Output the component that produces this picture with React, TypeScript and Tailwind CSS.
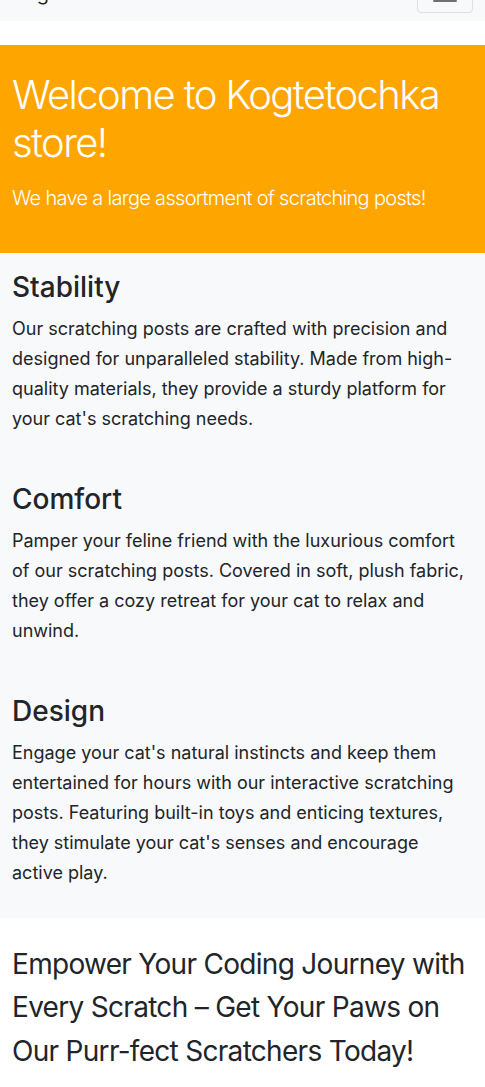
import React from 'react';

const features = [
  {
    title: 'Stability',
    text: "Our scratching posts are crafted with precision and designed for unparalleled stability. Made from high-quality materials, they provide a sturdy platform for your cat's scratching needs.",
  },
  {
    title: 'Comfort',
    text: 'Pamper your feline friend with the luxurious comfort of our scratching posts. Covered in soft, plush fabric, they offer a cozy retreat for your cat to relax and unwind.',
  },
  {
    title: 'Design',
    text: "Engage your cat's natural instincts and keep them entertained for hours with our interactive scratching posts. Featuring built-in toys and enticing textures, they stimulate your cat's senses and encourage active play.",
  },
];

function Navbar() {
  return (
    <nav className="-mt-[35px] flex h-14 items-center justify-between bg-[#f8f9fa] px-3">
      <a className="text-xl leading-[30px] text-black/90">Kogtetochka store</a>
      <button className="flex h-10 w-14 items-center justify-center rounded border border-black/10">
        <svg width="30" height="30" viewBox="0 0 30 30">
          <path
            d="M4 7h22M4 15h22M4 23h22"
            stroke="rgba(0,0,0,0.55)"
            strokeWidth="2"
            strokeLinecap="round"
          />
        </svg>
      </button>
    </nav>
  );
}

export default function App() {
  return (
    <div className="min-h-[1087px] overflow-hidden bg-white font-['Inter',sans-serif] text-[#212529]">
      <Navbar />
      <header className="mt-6 bg-[#ffa500] px-3 pt-[26px] pb-[40px] text-white">
        <h1 className="mb-4 text-[40px] font-light leading-[48px] tracking-[-0.04em]">
          Welcome to Kogtetochka store!
        </h1>
        <p className="text-xl font-light leading-[30px] tracking-[-0.035em]">
          We have a large assortment of scratching posts!
        </p>
      </header>
      <section className="flex flex-col gap-[48px] bg-[#f8f9fa] px-3 pt-[17px] pb-[30px]">
        {features.map((f) => (
          <div key={f.title}>
            <h3 className="mb-[10px] text-[28px] font-medium leading-[34px]">{f.title}</h3>
            <p className="text-lg leading-[30px]">{f.text}</p>
          </div>
        ))}
      </section>
      <section className="px-3 pt-[25px]">
        <p className="text-[28px] leading-[43.3px] tracking-[-0.025em]">
          Empower Your Coding Journey with Every Scratch – Get Your Paws on Our Purr-fect Scratchers Today!
        </p>
      </section>
    </div>
  );
}
